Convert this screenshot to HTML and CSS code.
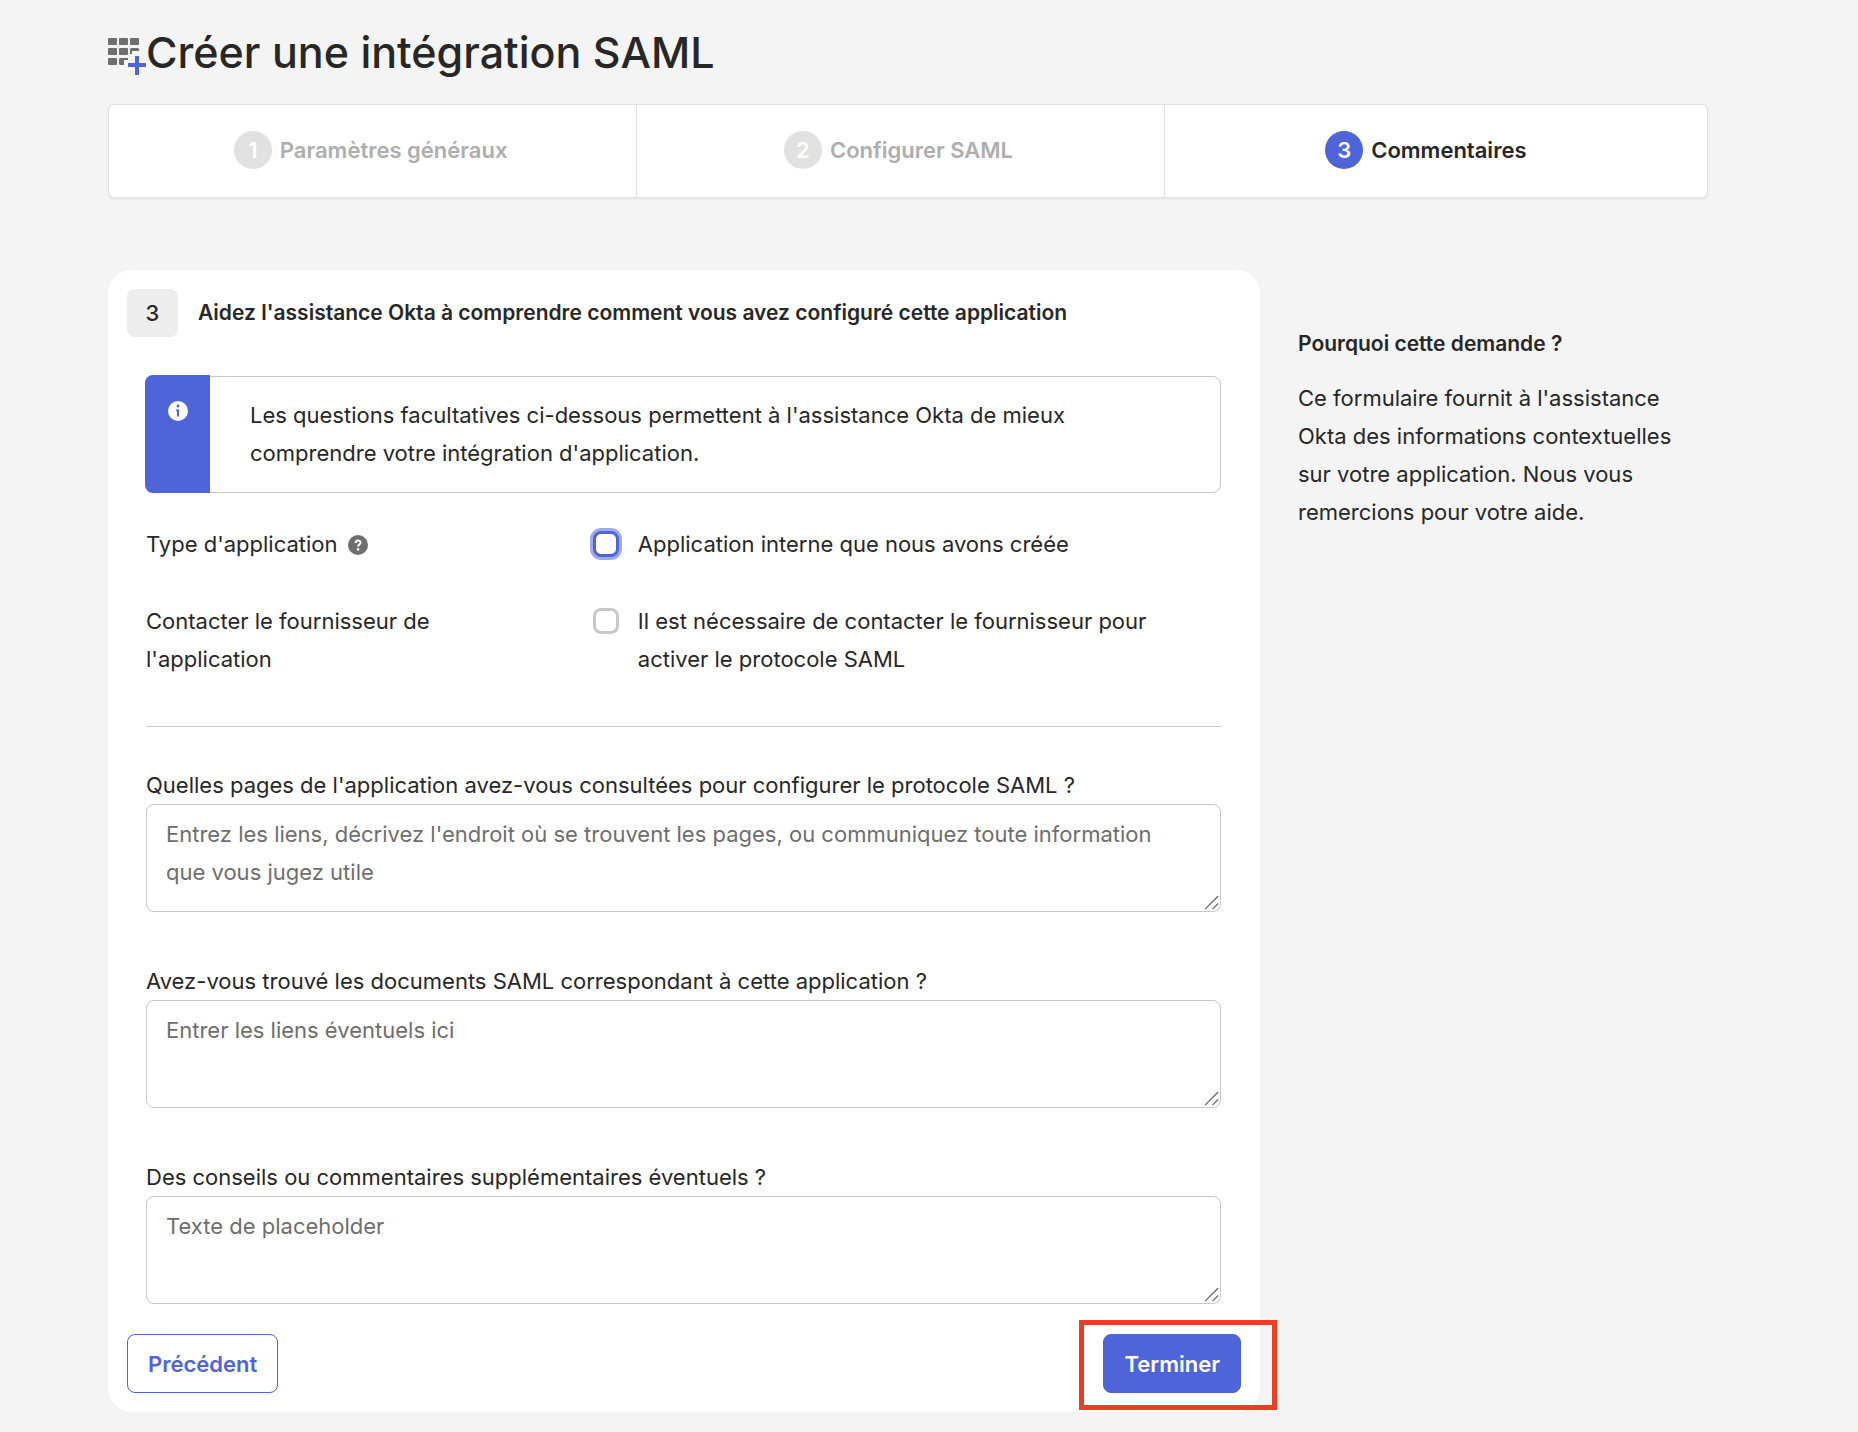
FILE: index.html
```html
<!DOCTYPE html>
<html lang="fr">
<head>
    <meta charset="UTF-8">
    <meta name="viewport" content="width=device-width, initial-scale=1">
    <title>Créer une intégration SAML</title>
    <link rel="stylesheet" href="styles.css">
</head>
<body>
    <header class="page-header">
        <svg class="app-icon" viewBox="0 0 38 38" aria-hidden="true">
            <g fill="#6e6e6e">
                <rect x="0" y="1" width="9" height="7" rx="1"/>
                <rect x="11" y="1" width="9" height="7" rx="1"/>
                <rect x="22" y="1" width="9" height="7" rx="1"/>
                <rect x="0" y="11" width="9" height="7" rx="1"/>
                <rect x="11" y="11" width="9" height="7" rx="1"/>
                <path d="M23 11h7l1 1v2h-7v3h-2v-5z"/>
                <rect x="0" y="21" width="9" height="7" rx="1"/>
                <path d="M12 21h8v2h-4v5h-4l-1-1v-5z"/>
            </g>
            <path d="M29 19v19M20 28h18" stroke="#4f64d9" stroke-width="4"/>
        </svg>
        <h1>Créer une intégration SAML</h1>
    </header>

    <ol class="steps">
        <li class="step"><span class="step-number">1</span>Paramètres généraux</li>
        <li class="step"><span class="step-number">2</span>Configurer SAML</li>
        <li class="step active" aria-current="step"><span class="step-number">3</span>Commentaires</li>
    </ol>

    <main class="content">
        <form class="card">
            <div class="card-header">
                <span class="badge">3</span>
                <h2>Aidez l'assistance Okta à comprendre comment vous avez configuré cette application</h2>
            </div>

            <div class="card-body">
                <div class="infobox">
                    <div class="infobox-icon">
                        <svg viewBox="0 0 20 20" aria-hidden="true">
                            <circle cx="10" cy="10" r="10" fill="#fff"/>
                            <circle cx="10" cy="5" r="1.4" fill="#4f64d9"/>
                            <path d="M8 8.500h3v7H9v-5.500H8z" fill="#4f64d9"/>
                        </svg>
                    </div>
                    <p>Les questions facultatives ci-dessous permettent à l'assistance Okta de mieux comprendre votre intégration d'application.</p>
                </div>

                <div class="row">
                    <div class="row-label">
                        Type d'application
                        <svg class="help" viewBox="0 0 20 20" aria-hidden="true">
                            <circle cx="10" cy="10" r="10" fill="#6e6e6e"/>
                            <path d="M7.700 8c0-3.300 4.800-3.100 4.800-.3 0 1.700-2.400 1.800-2.400 3.700" fill="none" stroke="#fff" stroke-width="2"/>
                            <circle cx="10.100" cy="14.400" r="1.300" fill="#fff"/>
                        </svg>
                    </div>
                    <div class="check">
                        <input type="checkbox" id="internal" class="focused">
                        <label for="internal">Application interne que nous avons créée</label>
                    </div>
                </div>

                <div class="row">
                    <div class="row-label">Contacter le fournisseur de l'application</div>
                    <div class="check">
                        <input type="checkbox" id="vendor">
                        <label for="vendor">Il est nécessaire de contacter le fournisseur pour activer le protocole SAML</label>
                    </div>
                </div>

                <hr>

                <div class="field">
                    <label for="pages">Quelles pages de l'application avez-vous consultées pour configurer le protocole SAML ?</label>
                    <textarea id="pages" placeholder="Entrez les liens, décrivez l'endroit où se trouvent les pages, ou communiquez toute information que vous jugez utile"></textarea>
                </div>
                <div class="field">
                    <label for="docs">Avez-vous trouvé les documents SAML correspondant à cette application ?</label>
                    <textarea id="docs" placeholder="Entrer les liens éventuels ici"></textarea>
                </div>
                <div class="field">
                    <label for="comments">Des conseils ou commentaires supplémentaires éventuels ?</label>
                    <textarea id="comments" placeholder="Texte de placeholder"></textarea>
                </div>
            </div>

            <div class="buttons">
                <button type="button" class="btn">Précédent</button>
                <div class="highlight">
                    <button type="submit" class="btn primary">Terminer</button>
                </div>
            </div>
        </form>

        <aside class="help-text">
            <h2>Pourquoi cette demande ?</h2>
            <p>Ce formulaire fournit à l'assistance Okta des informations contextuelles sur votre application. Nous vous remercions pour votre aide.</p>
        </aside>
    </main>
</body>
</html>
```
FILE: styles.css
```css
* {
    box-sizing: border-box;
}

body {
    margin: 0;
    padding: 20px 150px 20px 108px;
    background: #f4f4f4;
    color: #272727;
    font-family: Inter, "Liberation Sans", sans-serif;
    font-size: 22px;
    line-height: 38px;
}

h1, h2, p {
    margin: 0;
}

h1 {
    font-size: 43px;
    font-weight: 500;
    line-height: 64px;
}

h2 {
    font-size: 21px;
    font-weight: 600;
    line-height: 32px;
}

.page-header {
    display: flex;
    align-items: center;
    margin-bottom: 20px;
}

.app-icon {
    width: 38px;
    height: 38px;
    margin-top: 8px;
}

/* wizard steps */
.steps {
    display: grid;
    grid-template-columns: 33fr 33fr 34fr;
    margin: 0 0 72px;
    padding: 0;
    list-style: none;
    background: #fff;
    border: 1px solid #e1e1e1;
    border-radius: 6px;
    box-shadow: 0 2px 2px #e8e8e8;
}

.step {
    display: flex;
    align-items: center;
    justify-content: center;
    gap: 8px;
    height: 92px;
    padding: 0 4px 2px 0;
    color: #aeaeae;
    font-weight: 600;
}

.step:last-child {
    padding-right: 20px;
}

.step + .step {
    border-left: 1px solid #e1e1e1;
}

.step-number {
    width: 38px;
    height: 38px;
    border-radius: 50%;
    background: #e1e1e1;
    color: #fff;
    text-align: center;
}

.step.active {
    color: #272727;
}

.step.active .step-number {
    background: #4f64d9;
}

.content {
    display: grid;
    grid-template-columns: 72fr 28fr;
}

/* form card */
.card {
    padding: 19px;
    background: #fff;
    border-radius: 24px;
}

.card-header {
    display: flex;
    align-items: center;
    gap: 20px;
}

.badge {
    width: 51px;
    padding: 5px 0;
    background: #ededed;
    border-radius: 8px;
    text-align: center;
    font-weight: 500;
}

.card-body {
    padding: 39px 20px 0 19px;
}

.infobox {
    display: flex;
    margin-bottom: 32px;
    border: 1px solid #c8c8c8;
    border-radius: 8px;
}

.infobox-icon {
    width: 65px;
    margin: -2px 0 -1px -2px;
    padding-top: 26px;
    background: #4f64d9;
    border-radius: 8px 0 0 8px;
    text-align: center;
    line-height: 0;
}

.infobox-icon svg {
    width: 20px;
    height: 20px;
}

.infobox p {
    flex: 1;
    padding: 19px 40px 20px;
}

.row {
    display: grid;
    grid-template-columns: 446fr 627fr;
    margin-bottom: 39px;
}

.row-label {
    padding-right: 100px;
}

.help {
    width: 20px;
    height: 20px;
    margin-left: 4px;
    vertical-align: -3px;
}

.check {
    display: flex;
    align-items: flex-start;
    gap: 19px;
}

.check input {
    appearance: none;
    flex: none;
    width: 26px;
    height: 26px;
    margin: 6px 0;
    border: 3px solid #c8c8c8;
    border-radius: 8px;
    background: #fff;
}

.check input.focused {
    border-color: #4f64d9;
    box-shadow: 0 0 0 3px #a0abed;
}

hr {
    margin: 48px 0 39px;
    border: 0;
    border-top: 1px solid #c8c8c8;
}

.field {
    margin-bottom: 50px;
}

.field label {
    display: block;
}

textarea {
    display: block;
    width: 100%;
    height: 108px;
    padding: 10px 40px 10px 19px;
    border: 1px solid #c8c8c8;
    border-radius: 8px;
    background: #fff;
    color: inherit;
    font: inherit;
    resize: vertical;
}

textarea::placeholder {
    color: #6e6e6e;
}

textarea::-webkit-resizer {
    background: url("data:image/svg+xml,%3Csvg xmlns='http://www.w3.org/2000/svg' viewBox='0 0 16 16'%3E%3Cpath d='M0 14L14 0M8 14L14 8' stroke='%236e6e6e' stroke-width='1.500'/%3E%3C/svg%3E") no-repeat;
}

.field:last-child {
    margin-bottom: 30px;
}

.buttons {
    display: flex;
    justify-content: space-between;
}

.btn {
    height: 59px;
    padding: 0 20px;
    border: 1px solid #4f64d9;
    border-radius: 8px;
    background: #fff;
    color: #4f64d9;
    font: inherit;
    font-weight: 600;
    cursor: pointer;
}

.btn.primary {
    background: #4f64d9;
    color: #fff;
}

/* red frame around the button to click */
.highlight {
    position: relative;
}

.highlight::after {
    content: "";
    position: absolute;
    inset: -14px -36px -17px -24px;
    border: 5px solid #eb3f25;
    pointer-events: none;
}

.help-text {
    padding: 58px 0 0 38px;
}

.help-text h2 {
    margin-bottom: 19px;
}
```
